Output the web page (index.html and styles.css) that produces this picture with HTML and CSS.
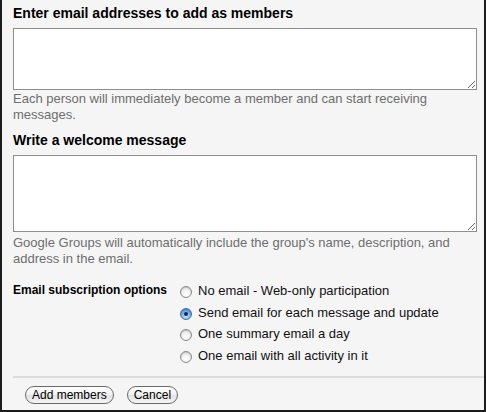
FILE: index.html
```html
<!DOCTYPE html>
<html>
<head>
<meta charset="utf-8">
<link rel="stylesheet" href="styles.css">
</head>
<body>
<div class="frame">
  <div class="heading">Enter email addresses to add as members</div>
  <textarea class="box box-emails"></textarea>
  <div class="help">Each person will immediately become a member and can start receiving messages.</div>
  <div class="heading heading-second">Write a welcome message</div>
  <textarea class="box box-welcome"></textarea>
  <div class="help help-second">Google Groups will automatically include the group's name, description, and address in the email.</div>
  <div class="subscription">
    <div class="sub-label">Email subscription options</div>
    <div class="options">
      <label class="option"><span class="radio"></span>No email - Web-only participation</label>
      <label class="option"><span class="radio checked"></span>Send email for each message and update</label>
      <label class="option"><span class="radio"></span>One summary email a day</label>
      <label class="option"><span class="radio"></span>One email with all activity in it</label>
    </div>
  </div>
  <div class="separator"></div>
  <div class="actions">
    <button class="btn">Add members</button>
    <button class="btn">Cancel</button>
  </div>
</div>
</body>
</html>
```

FILE: styles.css
```css
html, body {
  margin: 0;
  padding: 0;
  background: #f5f5f5;
}
.frame {
  width: 486px;
  height: 412px;
  box-sizing: border-box;
  border: 2px solid #1c1c1c;
  border-top: 0;
  background: #f5f5f5;
  padding: 5px 0 0 11px;
  font-family: "Liberation Sans", Arial, Helvetica, sans-serif;
  color: #000;
  overflow: hidden;
}
.heading {
  font-size: 14px;
  font-weight: bold;
  line-height: 17px;
}
.heading-second {
  margin-top: 9px;
}
.box {
  display: block;
  width: 464px;
  box-sizing: border-box;
  margin: 6px 0 0 0;
  border: 1px solid #8e8e8e;
  background: #fff;
  padding: 2px;
  resize: both;
  font-family: inherit;
}
.box-emails {
  height: 62px;
}
.box-welcome {
  height: 77px;
}
.help {
  width: 464px;
  margin-top: 1px;
  font-size: 13px;
  line-height: 16px;
  color: #6e6e6e;
}
.help-second {
  margin-top: 3px;
}
.subscription {
  display: grid;
  grid-template-columns: 167px 1fr;
  margin-top: 13px;
}
.sub-label {
  font-size: 12px;
  font-weight: bold;
  line-height: 15px;
  padding-top: 3px;
}
.options {
  display: flex;
  flex-direction: column;
}
.option {
  display: flex;
  align-items: center;
  font-size: 13px;
  line-height: 21.7px;
  color: #111;
}
.radio {
  width: 12px;
  height: 12px;
  box-sizing: border-box;
  border-radius: 50%;
  border: 1px solid #8a8a8a;
  background: radial-gradient(circle at 50% 70%, #ffffff 0%, #f2f2f2 45%, #d6d6d6 100%);
  margin: 2px 6px 0 0;
  box-shadow: inset 0 1px 1px rgba(0,0,0,0.15);
  position: relative;
}
.radio.checked {
  border-color: #3d6fae;
  background: radial-gradient(circle at 50% 75%, #cfe6ff 0%, #7fb3ec 45%, #3f82d4 100%);
}
.radio.checked::after {
  content: "";
  position: absolute;
  left: 3px;
  top: 3px;
  width: 4px;
  height: 4px;
  border-radius: 50%;
  background: #1a2a40;
}
.separator {
  height: 2px;
  background: #dcdcdc;
  margin-top: 9px;
}
.actions {
  display: flex;
  gap: 13px;
  padding: 8px 0 0 12px;
}
.btn {
  height: 18px;
  box-sizing: border-box;
  padding: 0 6px;
  border: 1px solid #6a6a6a;
  border-radius: 9px;
  background: linear-gradient(#ffffff, #f0f0f0 50%, #e2e2e2 51%, #f4f4f4);
  font-family: "Liberation Sans", Arial, Helvetica, sans-serif;
  font-size: 12px;
  line-height: 16px;
  color: #000;
}
```
